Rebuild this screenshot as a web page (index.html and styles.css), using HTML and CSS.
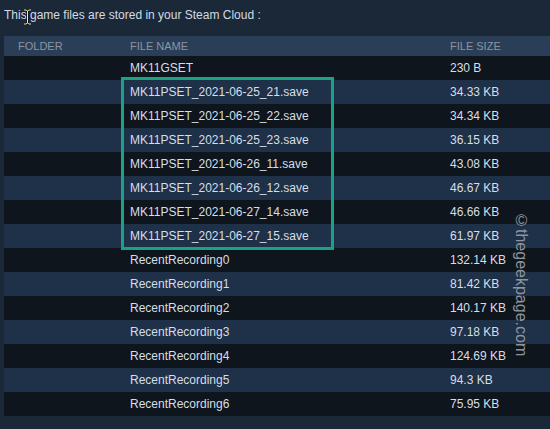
FILE: index.html
```html
<!DOCTYPE html>
<html lang="en">
<head>
    <meta charset="UTF-8">
    <title>Steam Cloud</title>
    <link rel="stylesheet" href="styles.css">
</head>
<body>
    <p class="intro">This game files are stored in your Steam Cloud :</p>

    <!-- text cursor caught in the screenshot -->
    <svg class="ibeam" width="9" height="16" viewBox="0 0 9 16">
        <path d="M1 1h2l1.5 1L6 1h2M4.5 2v12M1 15h2l1.5-1L6 15h2" fill="none" stroke="#111" stroke-width="2.4"/>
        <path d="M1 1h2l1.5 1L6 1h2M4.5 2v12M1 15h2l1.5-1L6 15h2" fill="none" stroke="#f1e9d2" stroke-width="1"/>
    </svg>

    <div class="files">
        <table>
            <thead>
                <tr>
                    <th class="col-folder">Folder</th>
                    <th class="col-name">File Name</th>
                    <th class="col-size">File Size</th>
                </tr>
            </thead>
            <tbody>
                <tr><td></td><td>MK11GSET</td><td>230 B</td></tr>
                <tr><td></td><td>MK11PSET_2021-06-25_21.save</td><td>34.33 KB</td></tr>
                <tr><td></td><td>MK11PSET_2021-06-25_22.save</td><td>34.34 KB</td></tr>
                <tr><td></td><td>MK11PSET_2021-06-25_23.save</td><td>36.15 KB</td></tr>
                <tr><td></td><td>MK11PSET_2021-06-26_11.save</td><td>43.08 KB</td></tr>
                <tr><td></td><td>MK11PSET_2021-06-26_12.save</td><td>46.67 KB</td></tr>
                <tr><td></td><td>MK11PSET_2021-06-27_14.save</td><td>46.66 KB</td></tr>
                <tr><td></td><td>MK11PSET_2021-06-27_15.save</td><td>61.97 KB</td></tr>
                <tr><td></td><td>RecentRecording0</td><td>132.14 KB</td></tr>
                <tr><td></td><td>RecentRecording1</td><td>81.42 KB</td></tr>
                <tr><td></td><td>RecentRecording2</td><td>140.17 KB</td></tr>
                <tr><td></td><td>RecentRecording3</td><td>97.18 KB</td></tr>
                <tr><td></td><td>RecentRecording4</td><td>124.69 KB</td></tr>
                <tr><td></td><td>RecentRecording5</td><td>94.3 KB</td></tr>
                <tr><td></td><td>RecentRecording6</td><td>75.95 KB</td></tr>
            </tbody>
        </table>
        <!-- highlight drawn round the save files -->
        <div class="highlight"></div>
    </div>

    <div class="watermark">&copy;thegeekpage.com</div>
</body>
</html>
```

FILE: styles.css
```css
body {
    background-color: #1b2838;
    color: #c6d4df;
    font-family: "Liberation Sans", Arial, sans-serif;
    margin: 0;
    padding: 0;
    height: 429px;
    overflow: hidden;
    position: relative;
}
.intro {
    margin: 0;
    padding: 8px 4px 0;
    height: 28px;
    box-sizing: border-box;
    font-size: 12px;
    line-height: 14px;
    color: #d2dbe3;
}
.ibeam {
    position: absolute;
    left: 23px;
    top: 9px;
}
.files {
    position: relative;
    margin: 8px 0 0 4px;
}
table {
    width: 100%;
    border-collapse: collapse;
}
th, td {
    padding: 0;
    text-align: left;
    white-space: nowrap;
}
th {
    background-color: #2b3e58;
    color: #8a95a2;
    font-size: 11px;
    font-weight: normal;
    text-transform: uppercase;
    height: 20px;
}
td {
    font-size: 12px;
    height: 24px;
    color: #d6dee6;
}
.col-folder {
    width: 112px;
    padding-left: 14px;
}
.col-name {
    width: 320px;
}
tbody tr:nth-child(odd) {
    background-color: #0f151d;
}
tbody tr:nth-child(even) {
    background-color: #1f3049;
}
.highlight {
    position: absolute;
    left: 117px;
    top: 41px;
    width: 207px;
    height: 167px;
    border: 3px solid #19a283;
}
.watermark {
    position: absolute;
    left: 512px;
    top: 212px;
    writing-mode: vertical-rl;
    font-size: 16px;
    color: #8e959d;
}
```
